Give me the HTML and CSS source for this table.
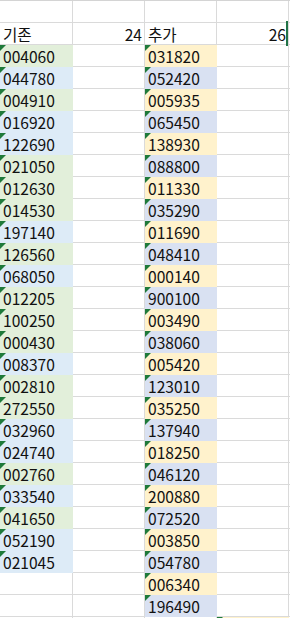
FILE: index.html
```html
<!DOCTYPE html>
<html lang="ko">
<head>
<meta charset="utf-8">
<link rel="stylesheet" href="styles.css">
</head>
<body>
<div class="sheet">
  <div class="row"><div class="c"></div><div class="c"></div><div class="c"></div><div class="c"></div><div class="c"></div></div>
  <div class="row"><div class="c">기존</div><div class="c num">24</div><div class="c">추가</div><div class="c num">26</div><div class="c sel"></div></div>
  <div class="row"><div class="c g t">004060</div><div class="c"></div><div class="c o t">031820</div><div class="c"></div><div class="c"></div></div>
  <div class="row"><div class="c b t">044780</div><div class="c"></div><div class="c p t">052420</div><div class="c"></div><div class="c"></div></div>
  <div class="row"><div class="c g t">004910</div><div class="c"></div><div class="c o t">005935</div><div class="c"></div><div class="c"></div></div>
  <div class="row"><div class="c b t">016920</div><div class="c"></div><div class="c p t">065450</div><div class="c"></div><div class="c"></div></div>
  <div class="row"><div class="c b t">122690</div><div class="c"></div><div class="c o t">138930</div><div class="c"></div><div class="c"></div></div>
  <div class="row"><div class="c g t">021050</div><div class="c"></div><div class="c p t">088800</div><div class="c"></div><div class="c"></div></div>
  <div class="row"><div class="c g t">012630</div><div class="c"></div><div class="c o t">011330</div><div class="c"></div><div class="c"></div></div>
  <div class="row"><div class="c g t">014530</div><div class="c"></div><div class="c p t">035290</div><div class="c"></div><div class="c"></div></div>
  <div class="row"><div class="c b t">197140</div><div class="c"></div><div class="c o t">011690</div><div class="c"></div><div class="c"></div></div>
  <div class="row"><div class="c g t">126560</div><div class="c"></div><div class="c p t">048410</div><div class="c"></div><div class="c"></div></div>
  <div class="row"><div class="c b t">068050</div><div class="c"></div><div class="c o t">000140</div><div class="c"></div><div class="c"></div></div>
  <div class="row"><div class="c g t">012205</div><div class="c"></div><div class="c p t">900100</div><div class="c"></div><div class="c"></div></div>
  <div class="row"><div class="c g t">100250</div><div class="c"></div><div class="c o t">003490</div><div class="c"></div><div class="c"></div></div>
  <div class="row"><div class="c g t">000430</div><div class="c"></div><div class="c p t">038060</div><div class="c"></div><div class="c"></div></div>
  <div class="row"><div class="c b t">008370</div><div class="c"></div><div class="c o t">005420</div><div class="c"></div><div class="c"></div></div>
  <div class="row"><div class="c g t">002810</div><div class="c"></div><div class="c p t">123010</div><div class="c"></div><div class="c"></div></div>
  <div class="row"><div class="c g t">272550</div><div class="c"></div><div class="c o t">035250</div><div class="c"></div><div class="c"></div></div>
  <div class="row"><div class="c b t">032960</div><div class="c"></div><div class="c p t">137940</div><div class="c"></div><div class="c"></div></div>
  <div class="row"><div class="c b t">024740</div><div class="c"></div><div class="c o t">018250</div><div class="c"></div><div class="c"></div></div>
  <div class="row"><div class="c g t">002760</div><div class="c"></div><div class="c p t">046120</div><div class="c"></div><div class="c"></div></div>
  <div class="row"><div class="c b t">033540</div><div class="c"></div><div class="c o t">200880</div><div class="c"></div><div class="c"></div></div>
  <div class="row"><div class="c g t">041650</div><div class="c"></div><div class="c p t">072520</div><div class="c"></div><div class="c"></div></div>
  <div class="row"><div class="c b t">052190</div><div class="c"></div><div class="c o t">003850</div><div class="c"></div><div class="c"></div></div>
  <div class="row"><div class="c b t">021045</div><div class="c"></div><div class="c p t">054780</div><div class="c"></div><div class="c"></div></div>
  <div class="row"><div class="c"></div><div class="c"></div><div class="c o t">006340</div><div class="c"></div><div class="c"></div></div>
  <div class="row"><div class="c"></div><div class="c"></div><div class="c p t">196490</div><div class="c"></div><div class="c"></div></div>
  <div class="row"><div class="c"></div><div class="c"></div><div class="c"></div><div class="c o t"></div><div class="c"></div></div>
</div>
</body>
</html>
```
FILE: styles.css
```css
html, body {
  margin: 0;
  padding: 0;
  background: #ffffff;
  overflow: hidden;
}
.sheet {
  width: 290px;
  height: 618px;
  overflow: hidden;
  border-top: 1px solid #d4d4d4;
  font-family: "Noto Sans CJK KR", "Noto Sans", sans-serif;
  font-size: 15.6px;
  color: #111;
}
.row {
  display: grid;
  grid-template-columns: 73px 72px 72px 72px 72px;
  height: 22px;
}
.c {
  position: relative;
  box-sizing: border-box;
  height: 22px;
  border-right: 1px solid #dadada;
  border-bottom: 1px solid #dadada;
  padding: 0 2px 0 3px;
  line-height: 22px;
  white-space: nowrap;
}
.num { text-align: right; }
.g { background: #e2efda; border-color: #e2efda; }
.b { background: #ddebf7; border-color: #ddebf7; }
.o { background: #fff2cc; border-color: #fff2cc; }
.p { background: #d9e1f2; border-color: #d9e1f2; }
.t::before {
  content: "";
  position: absolute;
  left: 0;
  top: 0;
  width: 0;
  height: 0;
  border-top: 6px solid #1f7a3a;
  border-right: 6px solid transparent;
}
.sel::before {
  content: "";
  position: absolute;
  left: -3px;
  top: -2px;
  width: 2px;
  height: 25px;
  background: #217346;
}
```
